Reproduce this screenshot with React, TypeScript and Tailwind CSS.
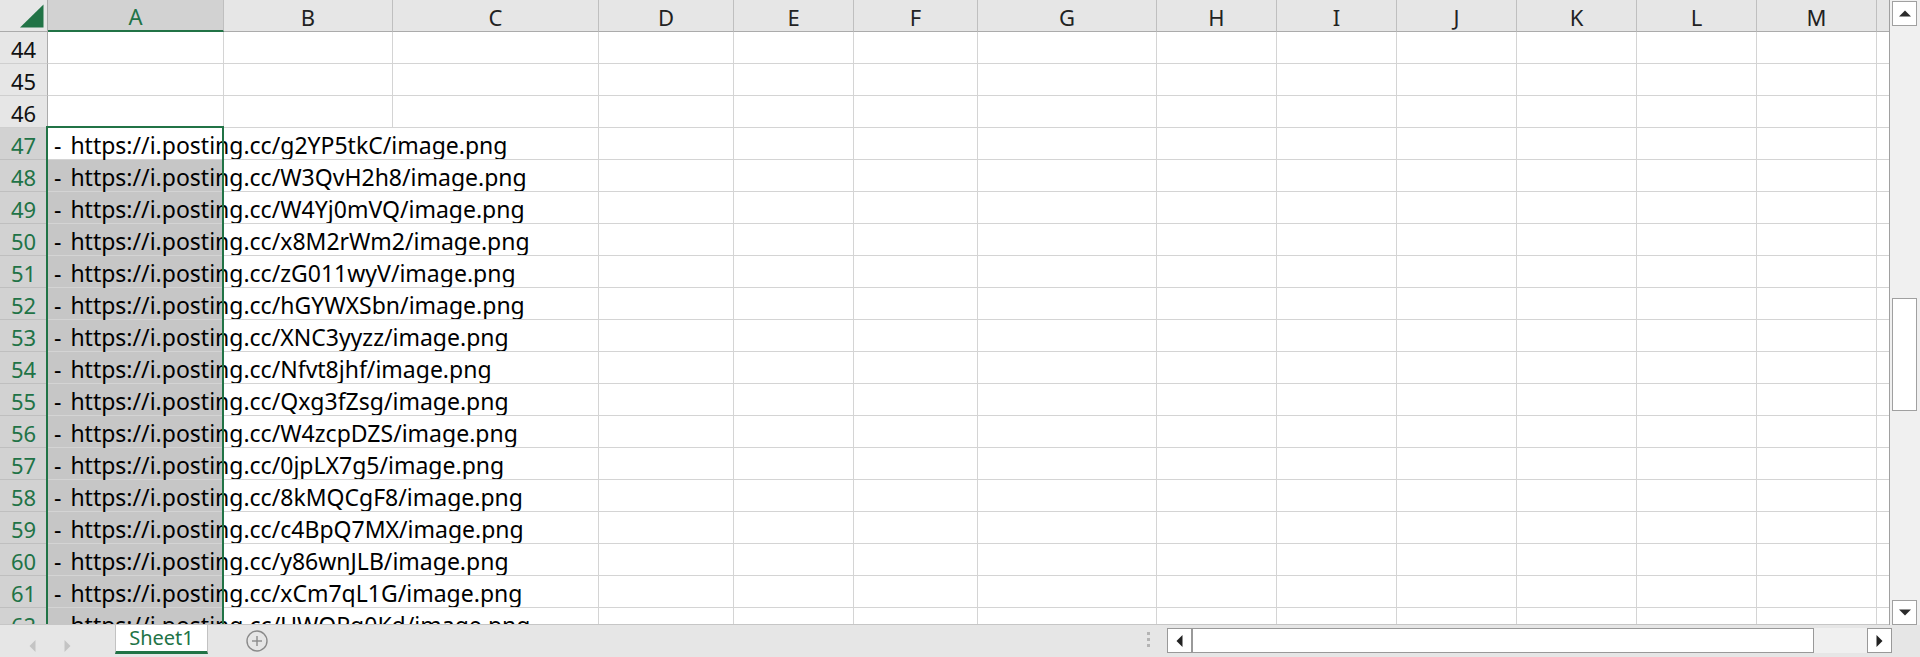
import React from 'react';

const FONT = { fontFamily: '"Noto Sans", "Noto Sans CJK SC", sans-serif' };

const urls: Record<number, string> = {
  47: 'g2YP5tkC',
  48: 'W3QvH2h8',
  49: 'W4Yj0mVQ',
  50: 'x8M2rWm2',
  51: 'zG011wyV',
  52: 'hGYWXSbn',
  53: 'XNC3yyzz',
  54: 'Nfvt8jhf',
  55: 'Qxg3fZsg',
  56: 'W4zcpDZS',
  57: '0jpLX7g5',
  58: '8kMQCgF8',
  59: 'c4BpQ7MX',
  60: 'y86wnJLB',
  61: 'xCm7qL1G',
  62: 'UWQPg0Kd',
};

// columns D..N (A, B, C handled separately because of the overflowing text)
const restCols = [
  { key: 'D', w: 'w-[135px]' },
  { key: 'E', w: 'w-[120px]' },
  { key: 'F', w: 'w-[124px]' },
  { key: 'G', w: 'w-[179px]' },
  { key: 'H', w: 'w-[120px]' },
  { key: 'I', w: 'w-[120px]' },
  { key: 'J', w: 'w-[120px]' },
  { key: 'K', w: 'w-[120px]' },
  { key: 'L', w: 'w-[120px]' },
  { key: 'M', w: 'w-[120px]' },
];

const rowNums = Array.from({ length: 19 }, (_, i) => 44 + i);

function ColumnHeader() {
  return (
    <div className="flex h-[32px] shrink-0 bg-[#e6e6e6] text-[22px] text-[#222]">
      <div className="w-[48px] shrink-0 border-r border-b border-[#ababab]">
        <svg width="47" height="31" viewBox="0 0 47 31">
          <polygon points="20,27.5 43.5,27.5 43.5,4.5" fill="#217346" />
        </svg>
      </div>
      <div className="w-[176px] shrink-0 flex items-end justify-center pb-[1px] bg-[#d2d2d2] text-[#217346] border-b-2 border-[#217346] border-r border-r-[#bfbfbf] leading-[26px]">
        A
      </div>
      <div className="w-[169px] shrink-0 flex items-end justify-center pb-[1px] border-r border-b border-[#bfbfbf] border-b-[#ababab] leading-[26px]">
        B
      </div>
      <div className="w-[206px] shrink-0 flex items-end justify-center pb-[1px] border-r border-b border-[#bfbfbf] border-b-[#ababab] leading-[26px]">
        C
      </div>
      {restCols.map((c) => (
        <div
          key={c.key}
          className={`${c.w} shrink-0 flex items-end justify-center pb-[1px] border-r border-b border-[#bfbfbf] border-b-[#ababab] leading-[26px]`}
        >
          {c.key}
        </div>
      ))}
      <div className="flex-1 border-b border-[#ababab]" />
    </div>
  );
}

function Row({ n }: { n: number }) {
  const code = urls[n];
  const selected = n >= 47;
  const shaded = n >= 48;
  return (
    <div className="flex h-[32px] shrink-0">
      <div
        className={
          selected
            ? 'w-[48px] shrink-0 flex items-end justify-center pb-[1px] leading-[26px] text-[22px] bg-[#d2d2d2] text-[#217346] border-r border-b border-[#bfbfbf] border-r-[#ababab]'
            : 'w-[48px] shrink-0 flex items-end justify-center pb-[1px] leading-[26px] text-[22px] bg-[#e6e6e6] text-[#111] border-r border-b border-[#cfcfcf] border-r-[#ababab]'
        }
      >
        {n}
      </div>
      {code ? (
        <>
          <div
            className={
              shaded
                ? 'w-[176px] shrink-0 flex items-end pl-[6px] pb-[1px] whitespace-nowrap text-[23px] leading-[26px] text-black bg-[#c6c6c6] border-b border-[#d4d4d4]'
                : 'w-[176px] shrink-0 flex items-end pl-[6px] pb-[1px] whitespace-nowrap text-[23px] leading-[26px] text-black border-b border-[#d4d4d4]'
            }
          >
            <span>
              - <span className="ml-[3px]">https://i.posting.cc/{code}/image.png</span>
            </span>
          </div>
          <div className="w-[169px] shrink-0 border-b border-[#d4d4d4]" />
          <div className="w-[206px] shrink-0 border-b border-r border-[#d4d4d4]" />
        </>
      ) : (
        <>
          <div className="w-[176px] shrink-0 border-b border-r border-[#d4d4d4]" />
          <div className="w-[169px] shrink-0 border-b border-r border-[#d4d4d4]" />
          <div className="w-[206px] shrink-0 border-b border-r border-[#d4d4d4]" />
        </>
      )}
      {restCols.map((c) => (
        <div key={c.key} className={`${c.w} shrink-0 border-b border-r border-[#d4d4d4]`} />
      ))}
      <div className="flex-1 border-b border-[#d4d4d4]" />
    </div>
  );
}

function VScrollBar() {
  return (
    <div className="w-[31px] shrink-0 flex flex-col items-start pl-[2px] bg-[#f0f0f0] border-l border-[#a0a0a0]">
      <div className="mt-[1px] w-[25px] h-[25px] flex items-center justify-center bg-white border border-[#a0a0a0]">
        <svg width="12" height="7" viewBox="0 0 12 7">
          <polygon points="0,6.5 12,6.5 6,0.5" fill="#2b2b2b" />
        </svg>
      </div>
      <div className="mt-[272px] w-[25px] h-[113px] bg-white border border-[#a0a0a0]" />
      <div className="mt-auto w-[25px] h-[25px] flex items-center justify-center bg-white border border-[#a0a0a0]">
        <svg width="12" height="7" viewBox="0 0 12 7">
          <polygon points="0,0.5 12,0.5 6,6.5" fill="#2b2b2b" />
        </svg>
      </div>
    </div>
  );
}

function TabBar() {
  return (
    <div className="flex h-[32px] shrink-0 items-start bg-[#e6e6e6]">
      <div className="w-[115px] shrink-0 flex items-center pl-[29px] gap-[28px] h-[22px] mt-[10px]">
        <svg width="7" height="12" viewBox="0 0 7 12">
          <polygon points="6.5,0 6.5,12 0.5,6" fill="#c4c4c4" />
        </svg>
        <svg width="7" height="12" viewBox="0 0 7 12">
          <polygon points="0.5,0 0.5,12 6.5,6" fill="#c4c4c4" />
        </svg>
      </div>
      <div className="w-[93px] h-[29px] shrink-0 flex items-center justify-center bg-white border-l border-r border-[#c2c2c2] border-b-[3px] border-b-[#217346] text-[20px] leading-[24px] text-[#217346]">
        Sheet1
      </div>
      <div className="ml-[38px] mt-[5px]">
        <svg width="22" height="22" viewBox="0 0 22 22">
          <circle cx="11" cy="11" r="10" fill="none" stroke="#8a8a8a" strokeWidth="1.4" />
          <line x1="6" y1="11" x2="16" y2="11" stroke="#8a8a8a" strokeWidth="1.4" />
          <line x1="11" y1="6" x2="11" y2="16" stroke="#8a8a8a" strokeWidth="1.4" />
        </svg>
      </div>
      <div className="ml-auto flex items-start pr-[28px]">
        <div className="flex flex-col gap-[3px] mt-[7px] mr-[17px]">
          <div className="w-[3px] h-[3px] bg-[#b4b4b4]" />
          <div className="w-[3px] h-[3px] bg-[#b4b4b4]" />
          <div className="w-[3px] h-[3px] bg-[#b4b4b4]" />
        </div>
        <div className="mt-[3px] flex h-[25px]">
          <div className="w-[25px] h-[25px] flex items-center justify-center bg-white border border-[#999]">
            <svg width="7" height="12" viewBox="0 0 7 12">
              <polygon points="6.5,0 6.5,12 0.5,6" fill="#222" />
            </svg>
          </div>
          <div className="w-[622px] h-[25px] bg-white border border-[#999]" />
          <div className="w-[53px] h-[25px] bg-[#f0f0f0]" />
          <div className="w-[25px] h-[25px] flex items-center justify-center bg-white border border-[#999]">
            <svg width="7" height="12" viewBox="0 0 7 12">
              <polygon points="0.5,0 0.5,12 6.5,6" fill="#222" />
            </svg>
          </div>
        </div>
      </div>
    </div>
  );
}

export default function App() {
  return (
    <div className="w-[1920px] h-[657px] flex flex-col overflow-hidden bg-white" style={FONT}>
      <div className="flex h-[625px] shrink-0">
        <div className="relative w-[1889px] shrink-0 flex flex-col overflow-hidden border-b border-[#c6c6c6]">
          <ColumnHeader />
          {rowNums.map((n) => (
            <Row key={n} n={n} />
          ))}
          {/* selection outline A47:A62 */}
          <div className="absolute left-[46px] top-[126px] w-[178px] h-[600px] border-2 border-[#217346] pointer-events-none" />
        </div>
        <VScrollBar />
      </div>
      <TabBar />
    </div>
  );
}
